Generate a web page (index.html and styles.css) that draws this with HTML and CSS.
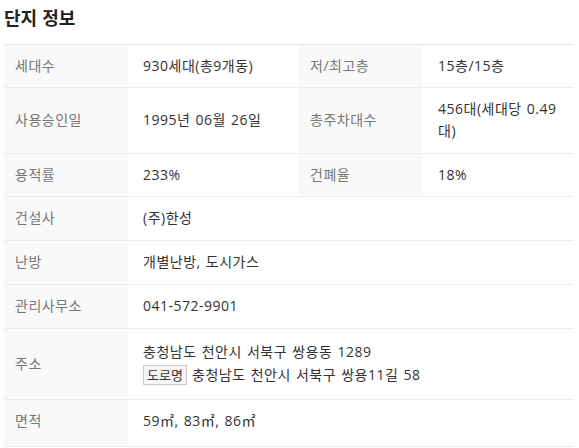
FILE: index.html
```html
<!DOCTYPE html>
<html lang="ko">
<head>
<meta charset="utf-8">
<link rel="stylesheet" href="styles.css">
</head>
<body>
<section class="info">
  <h2 class="title">단지 정보</h2>
  <table class="tbl">
    <colgroup>
      <col class="c-label"><col class="c-val1"><col class="c-label"><col class="c-val2">
    </colgroup>
    <tbody>
      <tr class="short">
        <th>세대수</th><td>930세대(총9개동)</td>
        <th>저/최고층</th><td>15층/15층</td>
      </tr>
      <tr>
        <th>사용승인일</th><td>1995년 06월 26일</td>
        <th>총주차대수</th><td>456대(세대당 0.49대)</td>
      </tr>
      <tr class="short">
        <th>용적률</th><td>233%</td>
        <th>건폐율</th><td>18%</td>
      </tr>
      <tr>
        <th>건설사</th><td colspan="3">(주)한성</td>
      </tr>
      <tr>
        <th>난방</th><td colspan="3">개별난방, 도시가스</td>
      </tr>
      <tr>
        <th>관리사무소</th><td colspan="3">041-572-9901</td>
      </tr>
      <tr class="addr">
        <th>주소</th>
        <td colspan="3">
          <div class="line">충청남도 천안시 서북구 쌍용동 1289</div>
          <div class="line"><span class="badge">도로명</span> 충청남도 천안시 서북구 쌍용11길 58</div>
        </td>
      </tr>
      <tr class="last">
        <th>면적</th><td colspan="3">59㎡, 83㎡, 86㎡</td>
      </tr>
    </tbody>
  </table>
</section>
</body>
</html>
```
FILE: styles.css
```css
html, body {
  margin: 0;
  padding: 0;
  background: #fff;
}
body {
  font-family: "Open Sans", "Noto Sans CJK KR", sans-serif;
  color: #333;
}
.info {
  padding: 0 6px 0 4px;
}
.title {
  margin: 0;
  padding-top: 5px;
  height: 39px;
  font-family: "Noto Sans CJK KR", sans-serif;
  font-size: 18px;
  font-weight: 700;
  line-height: 24px;
  color: #222;
}
.tbl {
  width: 569px;
  border-collapse: collapse;
  table-layout: fixed;
  font-size: 14px;
  line-height: 22px;
  letter-spacing: 0.5px;
  word-spacing: 1px;
  border-top: 1px solid #e5e5e5;
}
.c-label { width: 124px; }
.c-val1 { width: 171px; }
.c-val2 { width: 150px; }
.tbl th, .tbl td {
  border-bottom: 1px solid #ececec;
  padding: 10px 10px 11px 15px;
  text-align: left;
  vertical-align: middle;
}
.tbl .short th, .tbl .short td {
  padding-bottom: 10px;
}
.tbl th {
  background: #f9f9f9;
  font-weight: 400;
  color: #777;
  padding-left: 11px;
}
.tbl td {
  color: #333;
}
.tbl .addr td, .tbl .addr th {
  padding-top: 12px;
  padding-bottom: 13px;
}
.tbl .last td, .tbl .last th {
  padding-bottom: 14px;
}
.line + .line {
  margin-top: 1px;
}
.badge {
  display: inline-block;
  border: 1px solid #ccc;
  background: #f5f5f5;
  font-size: 13px;
  line-height: 18px;
  letter-spacing: 0;
  padding: 0 3px;
  color: #333;
}
```
